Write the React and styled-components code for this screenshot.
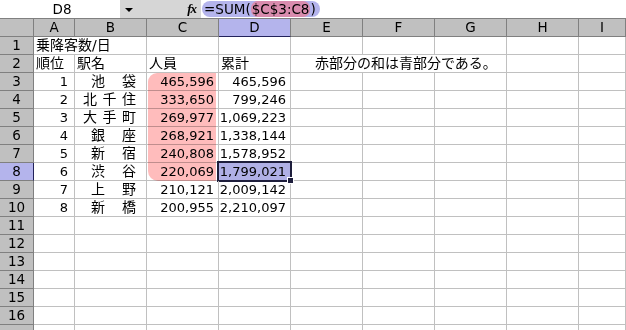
import React from 'react';
import styled, { createGlobalStyle, css } from 'styled-components';

const GlobalStyle = createGlobalStyle`
    body {
        margin: 0;
        background: #ffffff;
        font-family: "DejaVu Sans", "Noto Sans CJK JP", sans-serif;
        color: #000000;
    }
`;

const Page = styled.div`
    width: 626px;
    height: 330px;
    overflow: hidden;
    background: #ffffff;
`;

const FormulaBar = styled.div`
    display: flex;
    flex-direction: row;
    height: 19px;
    box-sizing: border-box;
    border-bottom: 1px solid #808080;
    font-size: 13.5px;
`;

const NameBox = styled.div`
    width: 120px;
    display: flex;
    align-items: center;
    justify-content: center;
    padding-left: 4px;
    box-sizing: border-box;
    background: #ffffff;
`;

const BarTools = styled.div`
    width: 81px;
    display: flex;
    align-items: center;
    justify-content: space-between;
    padding: 0 5px 0 5px;
    box-sizing: border-box;
    background: #d6d6d6;
`;

const Arrow = styled.span`
    width: 0;
    height: 0;
    border-left: 4px solid transparent;
    border-right: 4px solid transparent;
    border-top: 4px solid #000000;
    margin-top: 2px;
`;

const Fx = styled.span`
    font-family: "Liberation Serif", serif;
    font-style: italic;
    font-weight: bold;
    font-size: 13px;
    letter-spacing: -1px;
`;

const FormulaField = styled.div`
    flex: 1;
    display: flex;
    align-items: center;
    padding-left: 1px;
    background: #ffffff;
`;

const Pill = styled.span`
    display: flex;
    align-items: center;
    height: 16px;
    padding: 0 4px 0 2px;
    border-radius: 8px;
    background: #b4b4ec;
    line-height: 16px;
`;

const RefMark = styled.span`
    background: #d98cae;
    border-radius: 7px;
    padding: 0 1px;
`;

const Sheet = styled.div`
    display: grid;
    grid-template-columns: 34px 41px repeat(7, 72px) 1fr;
    grid-auto-rows: 18px;
    font-size: 14px;
`;

const HeadCell = styled.div`
    display: flex;
    align-items: center;
    justify-content: center;
    box-sizing: border-box;
    font-size: 13.5px;
    background: ${p => (p.$active ? '#b4b4ec' : '#c0c0c0')};
    border-right: 1px solid ${p => (p.$active && p.$side ? '#22225a' : '#808080')};
    border-bottom: 1px solid ${p => (p.$active && !p.$side ? '#22225a' : '#808080')};
    line-height: 17px;
`;

const Cell = styled.div`
    position: relative;
    display: flex;
    align-items: center;
    justify-content: ${p => p.$align || 'flex-start'};
    box-sizing: border-box;
    padding: 0 ${p => p.$pr ?? 2}px 0 ${p => p.$pl ?? 2}px;
    border-right: 1px solid #c0c0c0;
    border-bottom: 1px solid #c0c0c0;
    white-space: nowrap;
    font-size: ${p => (p.$num ? '13px' : '14px')};
    line-height: 17px;
    background: ${p => (p.$selected ? '#b0b0e6' : 'transparent')};

    ${p => p.$mark && css`
        &::before {
            content: '';
            position: absolute;
            top: 0;
            bottom: -1px;
            left: 1px;
            right: 2px;
            background: #ffbcbc;
            mix-blend-mode: multiply;
            border-top-left-radius: ${p.$mark === 'first' ? '9px' : '0'};
            border-bottom-left-radius: ${p.$mark === 'last' ? '10px' : '0'};
        }
    `}

    ${p => p.$selected && css`
        &::after {
            content: '';
            position: absolute;
            top: -2px;
            left: -2px;
            right: -2px;
            bottom: -2px;
            border: 2px solid #1e1e3c;
        }
    `}
`;

const FillHandle = styled.span`
    position: absolute;
    right: -4px;
    bottom: -4px;
    width: 5px;
    height: 5px;
    background: #1e1e3c;
    border: 1px solid #ffffff;
    z-index: 2;
`;

const Spread = styled.span`
    display: flex;
    justify-content: space-between;
    width: 100%;
`;

const Figure = styled.span`
    position: relative;
`;

const Note = styled.span`
    padding-left: 22px;
`;

const columns = ['A', 'B', 'C', 'D', 'E', 'F', 'G', 'H', 'I'];

const stations = [
    [1, '池袋', '465,596', '465,596'],
    [2, '北千住', '333,650', '799,246'],
    [3, '大手町', '269,977', '1,069,223'],
    [4, '銀座', '268,921', '1,338,144'],
    [5, '新宿', '240,808', '1,578,952'],
    [6, '渋谷', '220,069', '1,799,021'],
    [7, '上野', '210,121', '2,009,142'],
    [8, '新橋', '200,955', '2,210,097'],
];

const Blank = ({ count }) =>
    Array.from({ length: count }, (_, i) => <Cell key={'b' + i} />);

const App = () => {
    const rows = [];

    rows.push(
        <React.Fragment key="r1">
            <HeadCell>1</HeadCell>
            <Cell style={{ gridColumn: 'span 2' }}>乗降客数/日</Cell>
            <Blank count={7} />
        </React.Fragment>
    );

    rows.push(
        <React.Fragment key="r2">
            <HeadCell>2</HeadCell>
            <Cell>順位</Cell>
            <Cell>駅名</Cell>
            <Cell>人員</Cell>
            <Cell>累計</Cell>
            <Cell style={{ gridColumn: 'span 3' }}>
                <Note>赤部分の和は青部分である。</Note>
            </Cell>
            <Blank count={2} />
        </React.Fragment>
    );

    stations.forEach(([rank, name, count, total], i) => {
        const rowNo = i + 3;
        const mark = rowNo === 3 ? 'first' : rowNo === 8 ? 'last' : rowNo < 8 ? 'mid' : null;
        const chars = name.split('');
        rows.push(
            <React.Fragment key={'r' + rowNo}>
                <HeadCell $active={rowNo === 8} $side>{rowNo}</HeadCell>
                <Cell $num $align="flex-end" $pr={6}>{rank}</Cell>
                <Cell $pl={chars.length === 2 ? 16 : 8} $pr={10}>
                    <Spread>
                        {chars.map((c, k) => <span key={k}>{c}</span>)}
                    </Spread>
                </Cell>
                <Cell $num $align="flex-end" $pr={4} $mark={mark}>
                    <Figure>{count}</Figure>
                </Cell>
                <Cell $num $align="flex-end" $pr={4} $selected={rowNo === 8}>
                    <Figure>{total}</Figure>
                    {rowNo === 8 && <FillHandle />}
                </Cell>
                <Blank count={5} />
            </React.Fragment>
        );
    });

    for (let r = 11; r <= 17; r++) {
        rows.push(
            <React.Fragment key={'r' + r}>
                <HeadCell>{r < 17 ? r : ''}</HeadCell>
                <Blank count={9} />
            </React.Fragment>
        );
    }

    return (
        <Page>
            <GlobalStyle />
            <FormulaBar>
                <NameBox>D8</NameBox>
                <BarTools>
                    <Arrow />
                    <Fx>fx</Fx>
                </BarTools>
                <FormulaField>
                    <Pill>
                        =SUM(<RefMark>$C$3:C8</RefMark>)
                    </Pill>
                </FormulaField>
            </FormulaBar>
            <Sheet>
                <HeadCell />
                {columns.map(c => (
                    <HeadCell key={c} $active={c === 'D'}>{c}</HeadCell>
                ))}
                {rows}
            </Sheet>
        </Page>
    );
};

export default App;
